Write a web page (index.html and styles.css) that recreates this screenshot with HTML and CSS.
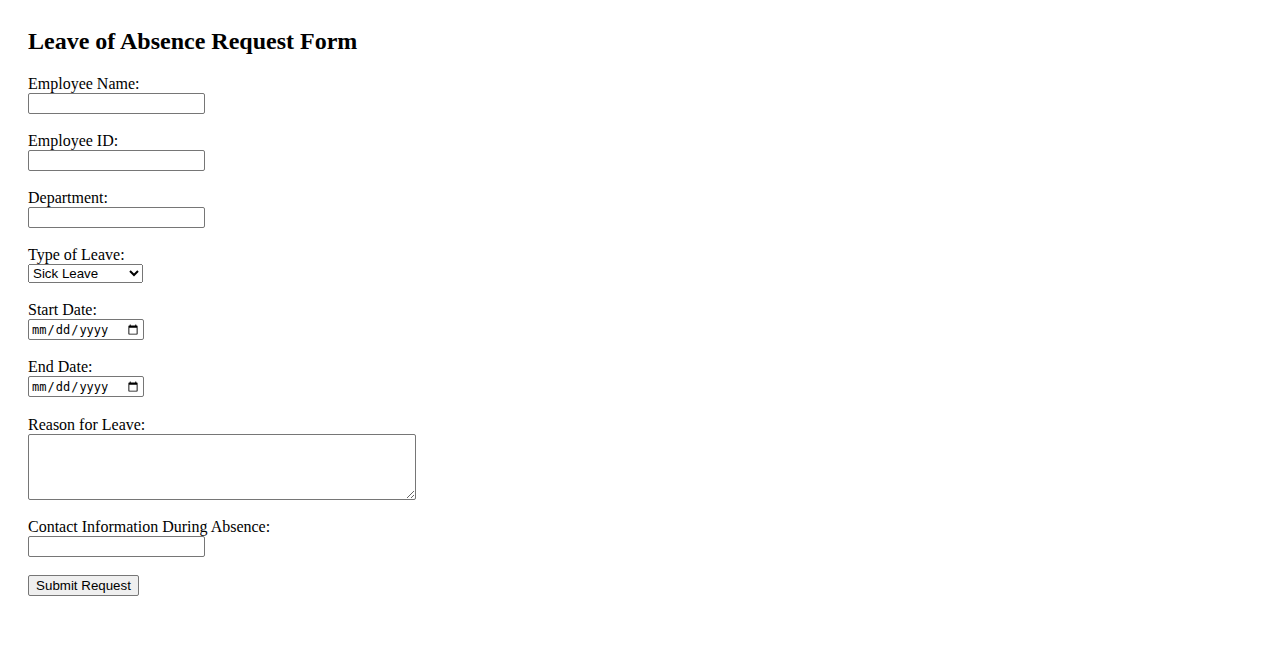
FILE: index.html
```html
<!DOCTYPE html>
<html lang="en">
<head>
<meta charset="utf-8">
<title>Leave of Absence Request Form</title>
<link rel="stylesheet" href="styles.css">
</head>
<body>
<h2 class="title">Leave of Absence Request Form</h2>
<form class="form">
<label for="name">Employee Name:</label><br>
<input class="text-field" type="text" id="name" name="name"><br><br>
<label for="empid">Employee ID:</label><br>
<input class="text-field" type="text" id="empid" name="empid"><br><br>
<label for="dept">Department:</label><br>
<input class="text-field" type="text" id="dept" name="dept"><br><br>
<label for="type">Type of Leave:</label><br>
<select class="select-field" id="type" name="type">
<option>Sick Leave</option>
<option>Vacation</option>
<option>Personal Leave</option>
<option>Maternity/Paternity Leave</option>
</select><br><br>
<label for="start">Start Date:</label><br>
<input class="date-field" type="date" id="start" name="start"><br><br>
<label for="end">End Date:</label><br>
<input class="date-field date-field--end" type="date" id="end" name="end"><br><br>
<label for="reason">Reason for Leave:</label><br>
<textarea class="area-field" id="reason" name="reason"></textarea><br><br>
<label for="contact">Contact Information During Absence:</label><br>
<input class="text-field" type="text" id="contact" name="contact"><br><br>
<button class="submit" type="submit">Submit Request</button>
</form>
</body>
</html>
```
FILE: styles.css
```css
body {
  margin: 0;
  padding: 28px;
  font-family: "Liberation Serif", "Times New Roman", serif;
  font-size: 16px;
  color: #000;
  background: #fff;
}
.title {
  margin: 0 0 20px;
  font-size: 24px;
  font-weight: bold;
}
.form {
  margin: 0;
}
.text-field,
.select-field,
.date-field,
.area-field,
.submit {
  font-family: "Liberation Sans", Arial, sans-serif;
  font-size: 13.333px;
  box-sizing: border-box;
  margin: 0;
}
.text-field {
  width: 177px;
  height: 21px;
  border: 1px solid #767676;
  border-radius: 2px;
  padding: 1px 2px;
}
.select-field {
  width: 115px;
  height: 19px;
}
.date-field {
  width: 116px;
  height: 21px;
  font-family: "DejaVu Sans Mono", "Liberation Mono", monospace;
  font-size: 12px;
  border: 1px solid #767676;
  border-radius: 2px;
  padding: 1px 2px;
}
.date-field--end {
  margin-bottom: 1px;
}
.area-field {
  width: 388px;
  height: 66px;
  border: 1px solid #767676;
  border-radius: 2px;
  padding: 2px;
  vertical-align: bottom;
}
.submit {
  width: 111px;
  height: 21px;
  background: #efefef;
  border: 1px solid #767676;
  border-radius: 2px;
  padding: 1px 2px;
  white-space: nowrap;
}
```
